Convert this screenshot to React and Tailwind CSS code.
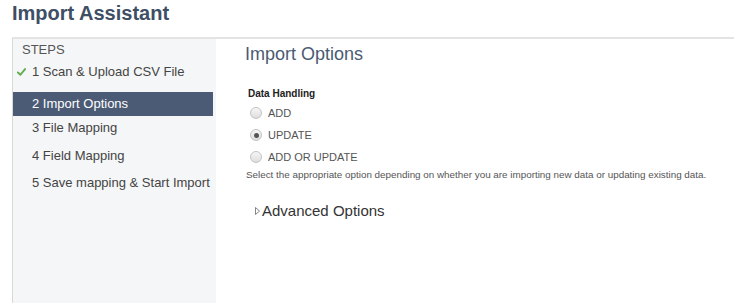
import React from "react";

function Radio({ checked, label }) {
  return (
    <div className="flex items-center h-[22px] leading-[22px] ml-[5px]">
      <span className="relative w-[12px] h-[12px] rounded-full border border-[#c4c4c4] bg-gradient-to-b from-[#f6f6f6] to-[#dedede] flex items-center justify-center">
        {checked && <span className="w-[5px] h-[5px] rounded-full bg-[#555]" />}
      </span>
      <span className="ml-[6px] text-[11px] text-[#555]">{label}</span>
    </div>
  );
}

export default function App() {
  return (
    <div
      className="h-[303px] w-[734px] overflow-hidden bg-white flex flex-col pl-[12px]"
      style={{ fontFamily: '"Liberation Sans", Arial, sans-serif' }}
    >
      <h1 className="h-[37px] pt-[3px] text-[20px] leading-5 font-bold text-[#3e4e65]">
        Import Assistant
      </h1>
      <div className="flex flex-1 border-t-2 border-[#e3e3e3]">
        <div className="w-[204px] bg-[#f5f6f7] border-l border-[#d8d8d8] text-[13px] text-[#444]">
          <div className="h-[22px] leading-[22px] pl-[9px] text-[#555]">STEPS</div>
          <div className="h-[22px] leading-[22px] flex items-center">
            <svg className="ml-[4px] w-[9px] h-[8px]" viewBox="0 0 10 9">
              <path d="M1 5 L3.8 7.6 L9 1.2" fill="none" stroke="#62ad4c" strokeWidth="2.2" strokeLinecap="round" strokeLinejoin="round" />
            </svg>
            <span className="ml-[6px]">1 Scan &amp; Upload CSV File</span>
          </div>
          <div className="mt-[9px] mr-[3px] h-[24px] leading-[24px] bg-[#4b5b75] text-white pl-[19px]">
            2 Import Options
          </div>
          <div className="h-[24px] leading-[24px] pl-[19px]">3 File Mapping</div>
          <div className="mt-[4px] h-[24px] leading-[24px] pl-[19px]">4 Field Mapping</div>
          <div className="mt-[3px] h-[24px] leading-[24px] pl-[19px]">5 Save mapping &amp; Start Import</div>
        </div>
        <div className="flex-1 pl-[29px] pt-[4px]">
          <h2 className="text-[18px] leading-[22px] text-[#4a5a72]">Import Options</h2>
          <div className="mt-[22px] ml-[3px] text-[10px] leading-[14px] font-bold text-[#222]">Data Handling</div>
          <div className="mt-[1px]">
            <Radio label="ADD" />
            <Radio label="UPDATE" checked />
            <Radio label="ADD OR UPDATE" />
          </div>
          <div className="ml-[1px] text-[9.85px] leading-[14px] text-[#555]">
            Select the appropriate option depending on whether you are importing new data or updating existing data.
          </div>
          <div className="mt-[19px] ml-[10px] flex items-center h-[20px]">
            <svg className="w-[5px] h-[8px]" viewBox="0 0 5 8">
              <path d="M0.5 0.5 L4.5 4 L0.5 7.5 Z" fill="none" stroke="#777" strokeWidth="0.9" />
            </svg>
            <span className="ml-[2px] text-[15px] leading-[20px] text-[#333]">Advanced Options</span>
          </div>
        </div>
      </div>
    </div>
  );
}
